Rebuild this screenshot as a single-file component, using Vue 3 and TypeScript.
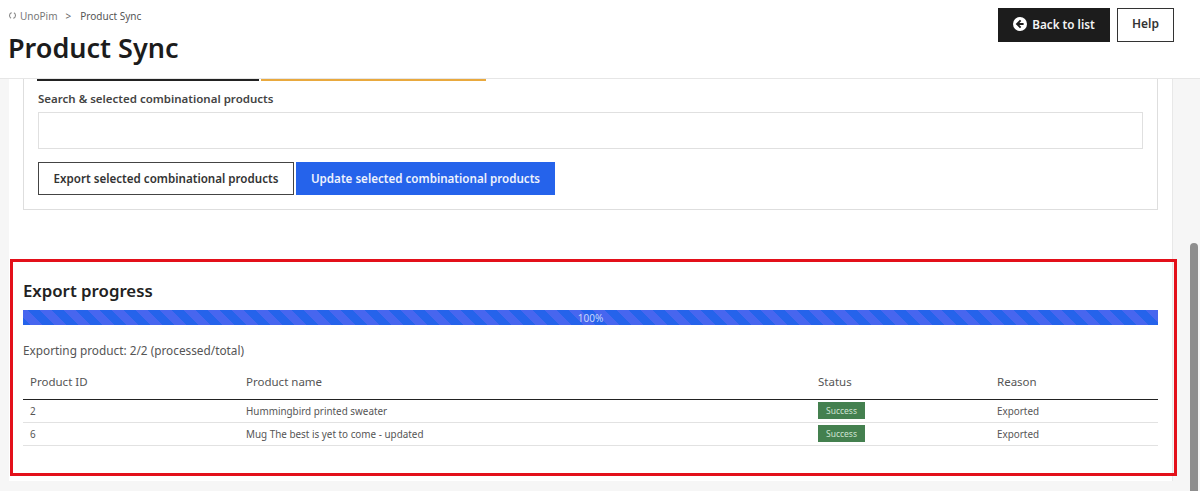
<template>
  <div class="page">
    <header class="topbar">
      <div class="title-block">
        <nav class="crumbs">
          <svg class="crumb-icon" viewBox="0 0 10 10" width="9" height="9">
            <path d="M4 1.8 A3.4 3.4 0 0 0 3.4 8 M6 8.2 A3.4 3.4 0 0 0 6.6 2" fill="none" stroke="#8a8a8a" stroke-width="1.2" />
          </svg>
          <span class="crumb-root">UnoPim</span>
          <span class="crumb-sep">&gt;</span>
          <span class="crumb-current">Product Sync</span>
        </nav>
        <h1>Product Sync</h1>
      </div>
      <div class="top-actions">
        <button class="btn-back">
          <svg viewBox="0 0 14 14" width="14" height="14">
            <circle cx="7" cy="7" r="7" fill="#fff" />
            <path d="M7.6 3.4 L4 7 L7.6 10.6 M4.4 7 H10.6" fill="none" stroke="#1c1c1c" stroke-width="1.9" />
          </svg>
          Back to list
        </button>
        <button class="btn-help">Help</button>
      </div>
    </header>

    <div class="body-row">
      <main class="content">
        <div class="sheet">
          <section class="combo-box">
            <div class="tab-lines">
              <span class="line-dark"></span>
              <span class="line-orange"></span>
            </div>
            <label class="search-label">Search &amp; selected combinational products</label>
            <div class="search-input"></div>
            <div class="combo-actions">
              <button class="btn-outline">Export selected combinational products</button>
              <button class="btn-blue">Update selected combinational products</button>
            </div>
          </section>

          <section class="progress-section">
            <h2>Export progress</h2>
            <div class="progress-bar">
              <span>{{ percent }}%</span>
            </div>
            <p class="progress-note">Exporting product: {{ processed }}/{{ total }} (processed/total)</p>
            <table class="result-table">
              <thead>
                <tr>
                  <th class="col-id">Product ID</th>
                  <th class="col-name">Product name</th>
                  <th class="col-status">Status</th>
                  <th>Reason</th>
                </tr>
              </thead>
              <tbody>
                <tr v-for="row in rows" :key="row.id">
                  <td>{{ row.id }}</td>
                  <td>{{ row.name }}</td>
                  <td><span class="badge">{{ row.status }}</span></td>
                  <td>{{ row.reason }}</td>
                </tr>
              </tbody>
            </table>
            <div class="red-mark"></div>
          </section>
        </div>
      </main>
      <aside class="scroll-track">
        <div class="scroll-thumb"></div>
      </aside>
    </div>
  </div>
</template>

<script setup lang="ts">
import { computed } from 'vue'

interface ResultRow {
  id: number
  name: string
  status: string
  reason: string
}

const rows: ResultRow[] = [
  { id: 2, name: 'Hummingbird printed sweater', status: 'Success', reason: 'Exported' },
  { id: 6, name: 'Mug The best is yet to come - updated', status: 'Success', reason: 'Exported' }
]

const processed = 2
const total = 2
const percent = computed(() => Math.round((processed / total) * 100))
</script>

<style>
html,
body {
  margin: 0;
  overflow: hidden;
}
</style>

<style scoped>
.page {
  width: 1200px;
  height: 491px;
  display: flex;
  flex-direction: column;
  overflow: hidden;
  background: #f6f6f6;
  font-family: "Noto Sans", "Liberation Sans", sans-serif;
  color: #2a2a2a;
}

.topbar {
  height: 78px;
  flex: none;
  display: flex;
  justify-content: space-between;
  align-items: flex-start;
  padding: 0 26px 0 8px;
  background: #fff;
  border-bottom: 1px solid #e6e6e6;
}

.crumbs {
  display: flex;
  align-items: center;
  height: 11px;
  margin-top: 10px;
  font-size: 10px;
}

.crumb-icon {
  margin-right: 3px;
}

.crumb-root {
  color: #777;
}

.crumb-sep {
  margin: 0 9px 0 8px;
  color: #666;
}

.crumb-current {
  color: #555;
}

h1 {
  margin: 11px 0 0;
  font-size: 27px;
  line-height: 32px;
  font-weight: 600;
  color: #1c1c1c;
}

.top-actions {
  display: flex;
  gap: 7px;
  margin-top: 8px;
}

button {
  font-family: inherit;
  cursor: pointer;
  border-radius: 0;
}

.btn-back {
  width: 112px;
  height: 34px;
  display: flex;
  align-items: center;
  justify-content: center;
  gap: 5px;
  padding: 0 0 3px;
  border: none;
  background: #1c1c1c;
  color: #f4f4f4;
  font-size: 11.7px;
  font-weight: 600;
}

.btn-help {
  width: 57px;
  height: 34px;
  padding: 0 0 3px;
  background: #fff;
  border: 1px solid #333;
  color: #333;
  font-size: 12px;
  font-weight: 600;
}

.body-row {
  flex: 1;
  min-height: 0;
  display: flex;
}

.content {
  flex: 1;
  min-width: 0;
  padding-left: 9px;
}

.sheet {
  width: 1164px;
  height: 402px;
  box-sizing: border-box;
  padding: 0 14px;
  background: #fff;
  border-right: 1px solid #e8e8e8;
}

.combo-box {
  height: 131px;
  box-sizing: border-box;
  padding: 0 14px;
  border: 1px solid #dedede;
  border-top: none;
}

.tab-lines {
  display: flex;
  gap: 2px;
  height: 2px;
  margin-left: -1px;
}

.line-dark {
  width: 222px;
  background: #222;
}

.line-orange {
  width: 225px;
  background: #e9a93e;
}

.search-label {
  display: block;
  margin-top: 10px;
  font-size: 11.5px;
  line-height: 15px;
  font-weight: 600;
  color: #444;
}

.search-input {
  height: 35px;
  margin-top: 6px;
  border: 1px solid #e0e0e0;
  background: #fff;
}

.combo-actions {
  display: flex;
  gap: 2px;
  margin-top: 13px;
}

.btn-outline {
  width: 256px;
  height: 33px;
  padding: 0;
  background: #fff;
  border: 1px solid #444;
  color: #333;
  font-size: 11.6px;
  font-weight: 600;
}

.btn-blue {
  width: 259px;
  height: 33px;
  padding: 0;
  background: #2563eb;
  border: none;
  color: #eef2fd;
  font-size: 11.6px;
  font-weight: 600;
}

.progress-section {
  position: relative;
  margin-top: 70px;
}

h2 {
  margin: 0;
  font-size: 16.8px;
  line-height: 22px;
  font-weight: 600;
  color: #222;
}

.progress-bar {
  height: 15px;
  margin-top: 8px;
  text-align: center;
  font-size: 10px;
  line-height: 16px;
  color: #c9d6fb;
  background: repeating-linear-gradient(
    45deg,
    #2563eb 0 5.3px,
    #4766ef 5.3px 13.8px,
    #2563eb 13.8px 17px
  );
}

.progress-note {
  margin: 16.5px 0 0;
  font-size: 11.8px;
  line-height: 16px;
  color: #555;
}

.result-table {
  width: 100%;
  margin-top: 9.5px;
  border-collapse: collapse;
  table-layout: fixed;
}

th {
  height: 32px;
  box-sizing: border-box;
  padding: 0 7px 2px;
  text-align: left;
  font-size: 11.5px;
  font-weight: 400;
  color: #555;
  border-bottom: 1px solid #222;
}

td {
  height: 22px;
  padding: 0 7px;
  font-size: 9.9px;
  color: #555;
  border-bottom: 1px solid #e2e2e2;
}

.col-id {
  width: 216px;
}

.col-name {
  width: 572px;
}

.col-status {
  width: 179px;
}

.badge {
  display: block;
  width: 47px;
  height: 17px;
  line-height: 18px;
  text-align: center;
  font-size: 8.5px;
  color: #cfe3d2;
  background: #44804f;
}

/* annotation round the section */
.red-mark {
  position: absolute;
  top: -21px;
  left: -13px;
  width: 1161px;
  height: 211px;
  border: 3px solid #e3101a;
  pointer-events: none;
}

.scroll-track {
  width: 27px;
  flex: none;
  display: flex;
  justify-content: flex-end;
  align-items: flex-end;
  padding-right: 2px;
  box-sizing: border-box;
}

.scroll-thumb {
  width: 8px;
  height: 248px;
  border-radius: 4px 4px 0 0;
  background: #8e8e8e;
}
</style>
